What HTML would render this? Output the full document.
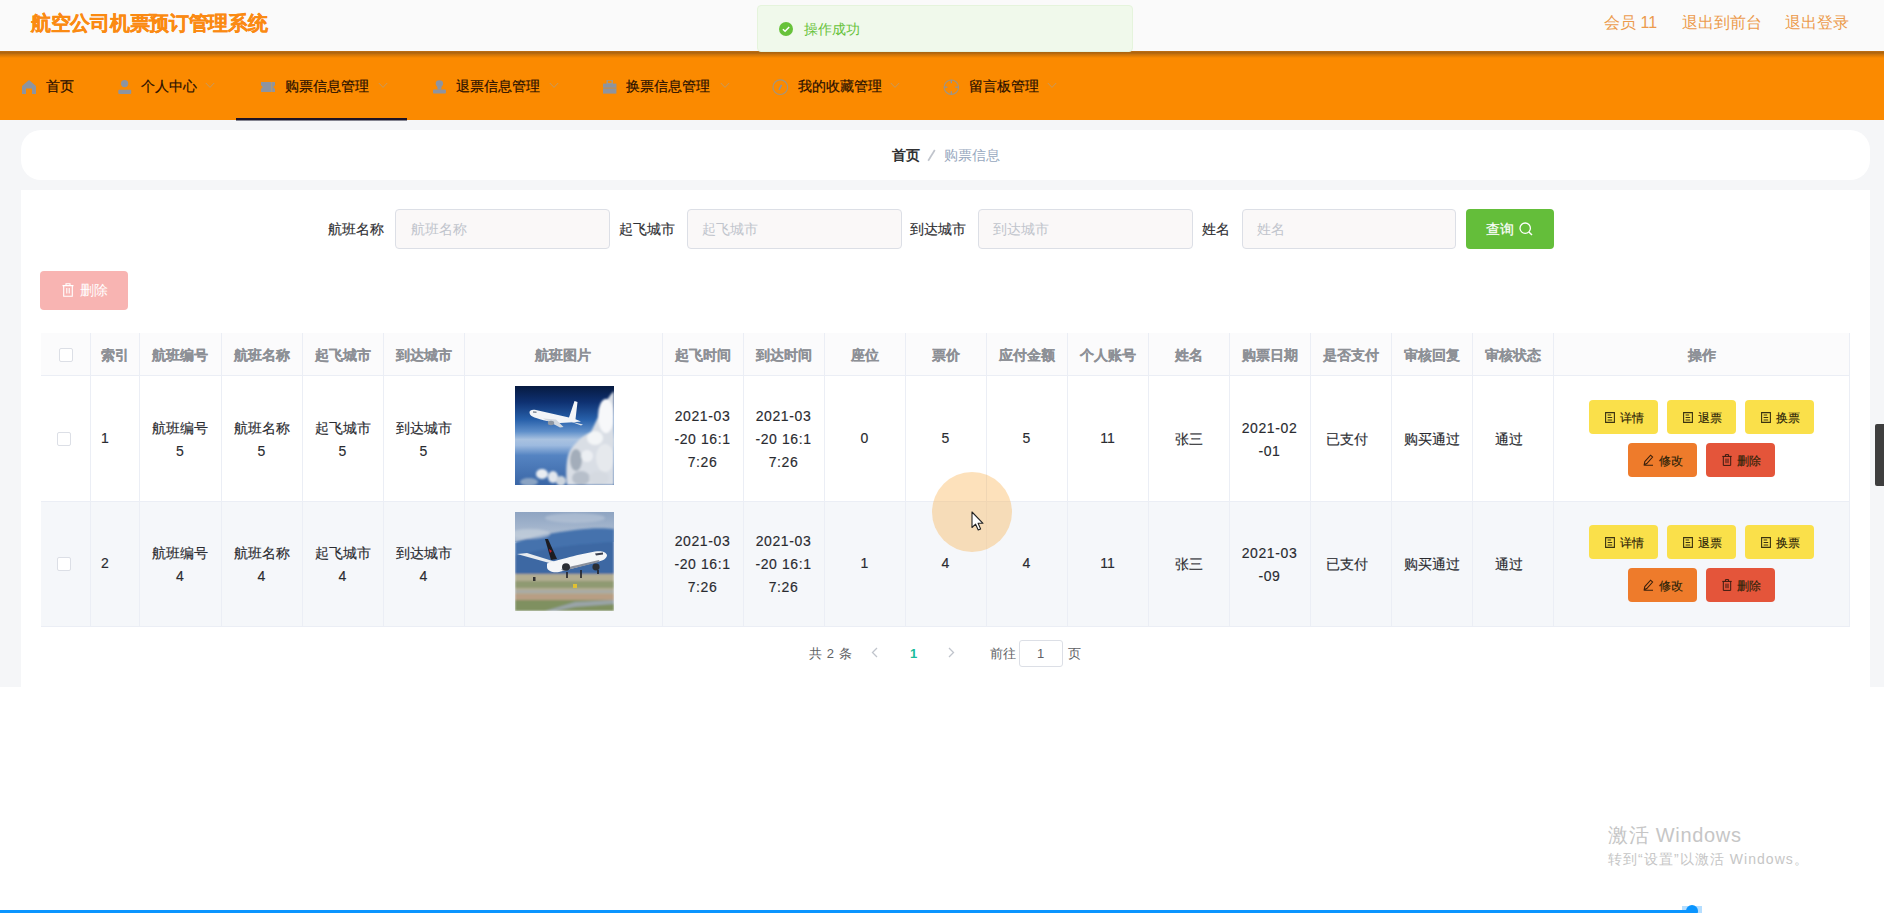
<!DOCTYPE html>
<html><head><meta charset="utf-8">
<style>
*{box-sizing:border-box;margin:0;padding:0}
html,body{width:1884px;height:913px;overflow:hidden;background:#fff;font-family:"Liberation Sans",sans-serif;color:#606266;position:relative}
.a{position:absolute;white-space:nowrap}
#hdr{left:0;top:0;width:1884px;height:51px;background:#fafafa}
#title{left:31px;top:10px;font-size:20px;letter-spacing:-0.3px;line-height:26px;font-weight:bold;color:#fa8a12;-webkit-text-stroke:0.3px #fa8a12}
.hl{top:10.5px;font-size:16px;line-height:24px;color:#ec9a4c}
#nav{left:0;top:51px;width:1884px;height:69px;background:#fb8a00}
#navsh{left:0;top:51px;width:1884px;height:7px;background:linear-gradient(rgba(120,80,40,.45) 0px,rgba(120,75,25,.62) 1.8px,rgba(120,75,25,.35) 3.5px,rgba(251,138,0,0) 7px)}
.nt{top:77px;font-size:14px;line-height:18px;color:#2a1000;-webkit-text-stroke:0.2px #2a1000}
.ni{top:80px}
.arr{top:83px}
#ul{left:236px;top:118px;width:171px;height:3px;background:linear-gradient(#1d1326 66%,rgba(40,40,60,.55) 66%)}
#toast{left:757px;top:5px;width:376px;height:47px;background:#f0f9eb;border:1px solid #e5f4dc;border-radius:4px}
#bg{left:0;top:120px;width:1884px;height:567px;background:#f5f6f8}
#bc{left:21px;top:130px;width:1849px;height:50px;background:#fff;border-radius:20px}
#card{left:21px;top:190px;width:1849px;height:497px;background:#fff}
.lbl{top:220px;font-size:14px;line-height:18px;color:#2f3033;-webkit-text-stroke:0.15px #2f3033}
.inp{top:209px;height:40px;background:#faf8f8;border:1px solid #dcdfe6;border-radius:4px;width:215px}
.ph{top:220px;font-size:14px;line-height:18px;color:#c0c4cc}
#qbtn{left:1466px;top:209px;width:88px;height:40px;background:#64be3a;border-radius:4px}
#dbtn{left:40px;top:271px;width:88px;height:39px;background:#f8b4b2;border-radius:4px}
.hd{top:333px;height:43px;background:#fbfbfc}
.vl{width:1px;background:#ebeef5}
.hl2{height:1px;background:#ebeef5}
.th{top:346px;font-size:14px;line-height:18px;font-weight:bold;color:#8d9096;text-align:center;-webkit-text-stroke:0.15px #8d9096}
.td{font-size:14px;line-height:23px;color:#2a2b30;-webkit-text-stroke:0.15px #2a2b30;text-align:center}
.cb{width:14px;height:14px;border:1px solid #dcdfe6;border-radius:2px;background:#fff}
.btn{height:34px;width:69px;border-radius:4px}
.bt{left:31px;top:10px;font-size:12px;line-height:16px;color:#2a2208;-webkit-text-stroke:0.15px #2a2208}
.y{background:#fae04a}
.o{background:#ee7b2b}
.r{background:#e4553a}
.pg{top:645px;font-size:13px;line-height:18px;color:#606266}
</style></head><body>
<div class="a" id="bg"></div>
<div class="a" id="hdr"></div>
<div class="a" id="title">航空公司机票预订管理系统</div>
<div class="a hl" style="left:1604px">会员 11</div>
<div class="a hl" style="left:1682px">退出到前台</div>
<div class="a hl" style="left:1785px">退出登录</div>

<div class="a" id="nav"></div>
<div class="a" id="navsh"></div>
<!-- nav items -->
<div class="a nt" style="left:46px">首页</div>
<div class="a nt" style="left:141px">个人中心</div>
<div class="a nt" style="left:285px">购票信息管理</div>
<div class="a nt" style="left:456px">退票信息管理</div>
<div class="a nt" style="left:626px">换票信息管理</div>
<div class="a nt" style="left:798px">我的收藏管理</div>
<div class="a nt" style="left:969px">留言板管理</div>
<!-- NAVICONS -->
<svg class="a" style="left:22px;top:80px" width="14" height="14" viewBox="0 0 14 14"><path d="M7 0 L14 6 V14 H10 V8.5 H4 V14 H0 V6 Z" fill="#8d94a0"/></svg>
<svg class="a" style="left:118px;top:80px" width="14" height="14" viewBox="0 0 14 14"><circle cx="6.6" cy="3.6" r="3.6" fill="#8d94a0"/><rect x="0.3" y="9.8" width="12.9" height="4.2" rx="1" fill="#8d94a0"/></svg>
<svg class="a" style="left:261px;top:82px" width="14" height="10" viewBox="0 0 14 10"><path d="M0 0 H14 V3.5 A1.5 1.5 0 0 0 14 6.5 V10 H0 V6.5 A1.5 1.5 0 0 0 0 3.5 Z" fill="#8d94a0"/><rect x="10.3" y="0" width="0.9" height="10" fill="#c49a60"/></svg>
<svg class="a" style="left:433px;top:80px" width="13" height="14" viewBox="0 0 13 14"><ellipse cx="6.4" cy="3.6" rx="3.7" ry="3.4" fill="#8d94a0"/><path d="M4.2 6 H8.6 L8.2 9.6 H4.6 Z" fill="#8d94a0"/><rect x="0" y="9.6" width="12.9" height="3.9" rx="0.8" fill="#8d94a0"/></svg>
<svg class="a" style="left:603px;top:80px" width="14" height="14" viewBox="0 0 14 14"><rect x="4.2" y="0" width="5" height="3.6" fill="none" stroke="#9c9a92" stroke-width="1.4"/><rect x="0" y="3.6" width="13.4" height="10" fill="#8d94a0"/><rect x="0" y="7.4" width="13.4" height="1.5" fill="#b39064"/></svg>
<svg class="a" style="left:772px;top:79px" width="17" height="17" viewBox="0 0 17 17"><circle cx="8.3" cy="8.2" r="7.3" fill="none" stroke="#a19580" stroke-width="1.2"/><path d="M9.6 5.8 L7 10.8" stroke="#8d94a0" stroke-width="1.6"/></svg>
<svg class="a" style="left:943px;top:79px" width="17" height="17" viewBox="0 0 17 17"><circle cx="8.3" cy="8.2" r="7.2" fill="none" stroke="#a19580" stroke-width="1.2"/><path d="M8.3 1 V4.2 M8.3 12.2 V15.4 M1.1 8.2 H4.3 M12.3 8.2 H15.5" stroke="#8d94a0" stroke-width="1.3"/></svg>
<svg class="a" style="left:205px;top:82px" width="10" height="7" viewBox="0 0 10 7"><path d="M0.8 1 L5 5.4 L9.2 1" fill="none" stroke="#c49a62" stroke-width="1"/></svg>
<svg class="a" style="left:378px;top:82px" width="10" height="7" viewBox="0 0 10 7"><path d="M0.8 1 L5 5.4 L9.2 1" fill="none" stroke="#c49a62" stroke-width="1"/></svg>
<svg class="a" style="left:549px;top:82px" width="10" height="7" viewBox="0 0 10 7"><path d="M0.8 1 L5 5.4 L9.2 1" fill="none" stroke="#c49a62" stroke-width="1"/></svg>
<svg class="a" style="left:720px;top:82px" width="10" height="7" viewBox="0 0 10 7"><path d="M0.8 1 L5 5.4 L9.2 1" fill="none" stroke="#c49a62" stroke-width="1"/></svg>
<svg class="a" style="left:890px;top:82px" width="10" height="7" viewBox="0 0 10 7"><path d="M0.8 1 L5 5.4 L9.2 1" fill="none" stroke="#c49a62" stroke-width="1"/></svg>
<svg class="a" style="left:1047px;top:82px" width="10" height="7" viewBox="0 0 10 7"><path d="M0.8 1 L5 5.4 L9.2 1" fill="none" stroke="#c49a62" stroke-width="1"/></svg>
<!-- /NAVICONS -->
<div class="a" id="ul"></div>

<div class="a" id="toast"></div>
<div class="a" style="left:804px;top:20px;font-size:14px;line-height:18px;color:#67c23a">操作成功</div>

<div class="a" id="bc"></div>
<div class="a" style="left:892px;top:146px;font-size:14px;line-height:18px;font-weight:bold;color:#303133">首页</div>
<svg class="a" style="left:926px;top:148px" width="12" height="15" viewBox="0 0 12 15"><path d="M8.8 2 L2.2 12.8" stroke="#c0c4cc" stroke-width="1.7"/></svg>
<div class="a" style="left:944px;top:146px;font-size:14px;line-height:18px;color:#97a8be">购票信息</div>

<div class="a" id="card"></div>
<div class="a lbl" style="left:328px">航班名称</div>
<div class="a inp" style="left:395px"></div>
<div class="a ph" style="left:411px">航班名称</div>
<div class="a lbl" style="left:619px">起飞城市</div>
<div class="a inp" style="left:687px"></div>
<div class="a ph" style="left:702px">起飞城市</div>
<div class="a lbl" style="left:910px">到达城市</div>
<div class="a inp" style="left:978px"></div>
<div class="a ph" style="left:993px">到达城市</div>
<div class="a lbl" style="left:1202px">姓名</div>
<div class="a inp" style="left:1242px;width:214px"></div>
<div class="a ph" style="left:1257px">姓名</div>
<div class="a" id="qbtn"></div>
<div class="a" style="left:1486px;top:220px;font-size:14px;line-height:18px;color:#fff;-webkit-text-stroke:0.2px #fff">查询</div>

<div class="a" id="dbtn"></div>
<div class="a" style="left:80px;top:281px;font-size:14px;line-height:18px;color:#fff">删除</div>

<!-- TABLE -->
<div class="a hd" style="left:41px;width:1809px"></div>
<div class="a" style="left:41px;top:502px;width:1809px;height:125px;background:#f5f7fa"></div>
<div class="a hl2" style="left:41px;top:375px;width:1809px"></div>
<div class="a hl2" style="left:41px;top:501px;width:1809px"></div>
<div class="a hl2" style="left:41px;top:626px;width:1809px"></div>
<div class="a vl" style="left:90px;top:333px;height:293px"></div>
<div class="a vl" style="left:139px;top:333px;height:293px"></div>
<div class="a vl" style="left:221px;top:333px;height:293px"></div>
<div class="a vl" style="left:302px;top:333px;height:293px"></div>
<div class="a vl" style="left:383px;top:333px;height:293px"></div>
<div class="a vl" style="left:464px;top:333px;height:293px"></div>
<div class="a vl" style="left:662px;top:333px;height:293px"></div>
<div class="a vl" style="left:743px;top:333px;height:293px"></div>
<div class="a vl" style="left:824px;top:333px;height:293px"></div>
<div class="a vl" style="left:905px;top:333px;height:293px"></div>
<div class="a vl" style="left:986px;top:333px;height:293px"></div>
<div class="a vl" style="left:1067px;top:333px;height:293px"></div>
<div class="a vl" style="left:1148px;top:333px;height:293px"></div>
<div class="a vl" style="left:1229px;top:333px;height:293px"></div>
<div class="a vl" style="left:1310px;top:333px;height:293px"></div>
<div class="a vl" style="left:1391px;top:333px;height:293px"></div>
<div class="a vl" style="left:1472px;top:333px;height:293px"></div>
<div class="a vl" style="left:1553px;top:333px;height:293px"></div>
<div class="a vl" style="left:1849px;top:333px;height:293px"></div>
<div class="a th" style="left:90px;width:49px">索引</div>
<div class="a th" style="left:139px;width:82px">航班编号</div>
<div class="a th" style="left:221px;width:81px">航班名称</div>
<div class="a th" style="left:302px;width:81px">起飞城市</div>
<div class="a th" style="left:383px;width:81px">到达城市</div>
<div class="a th" style="left:464px;width:198px">航班图片</div>
<div class="a th" style="left:662px;width:81px">起飞时间</div>
<div class="a th" style="left:743px;width:81px">到达时间</div>
<div class="a th" style="left:824px;width:81px">座位</div>
<div class="a th" style="left:905px;width:81px">票价</div>
<div class="a th" style="left:986px;width:81px">应付金额</div>
<div class="a th" style="left:1067px;width:81px">个人账号</div>
<div class="a th" style="left:1148px;width:81px">姓名</div>
<div class="a th" style="left:1229px;width:81px">购票日期</div>
<div class="a th" style="left:1310px;width:81px">是否支付</div>
<div class="a th" style="left:1391px;width:81px">审核回复</div>
<div class="a th" style="left:1472px;width:81px">审核状态</div>
<div class="a th" style="left:1553px;width:297px">操作</div>
<div class="a cb" style="left:59px;top:348px"></div>
<div class="a cb" style="left:57px;top:432px"></div>
<div class="a td" style="left:101px;top:427px;text-align:left">1</div>
<div class="a td" style="left:139px;top:417px;width:82px">航班编号<br>5</div>
<div class="a td" style="left:221px;top:417px;width:81px">航班名称<br>5</div>
<div class="a td" style="left:302px;top:417px;width:81px">起飞城市<br>5</div>
<div class="a td" style="left:383px;top:417px;width:81px">到达城市<br>5</div>
<div class="a td" style="left:662px;top:405px;width:81px;letter-spacing:0.6px">2021-03<br>-20 16:1<br>7:26</div>
<div class="a td" style="left:743px;top:405px;width:81px;letter-spacing:0.6px">2021-03<br>-20 16:1<br>7:26</div>
<div class="a td" style="left:824px;top:427px;width:81px">0</div>
<div class="a td" style="left:905px;top:427px;width:81px">5</div>
<div class="a td" style="left:986px;top:427px;width:81px">5</div>
<div class="a td" style="left:1067px;top:427px;width:81px">11</div>
<div class="a td" style="left:1148px;top:428px;width:81px">张三</div>
<div class="a td" style="left:1229px;top:417px;width:81px;letter-spacing:0.6px">2021-02<br>-01</div>
<div class="a td" style="left:1306px;top:428px;width:81px">已支付</div>
<div class="a td" style="left:1391px;top:428px;width:81px">购买通过</div>
<div class="a td" style="left:1468px;top:428px;width:81px">通过</div>
<div class="a" style="left:515px;top:386px;width:99px;height:99px;overflow:hidden"><svg width="99" height="99" viewBox="0 0 99 99" style="display:block">
<defs>
<linearGradient id="sky1" x1="0" y1="0" x2="0" y2="1">
<stop offset="0" stop-color="#061a40"/><stop offset="0.16" stop-color="#0e3070"/><stop offset="0.34" stop-color="#2760aa"/>
<stop offset="0.46" stop-color="#5f8fca"/><stop offset="0.54" stop-color="#a9c2e0"/><stop offset="0.6" stop-color="#9dbadf"/>
<stop offset="0.7" stop-color="#5584c2"/><stop offset="1" stop-color="#3a66a6"/></linearGradient>
<filter id="bl1" x="-10%" y="-10%" width="120%" height="120%"><feGaussianBlur stdDeviation="1.3"/></filter>
</defs>
<rect width="99" height="99" fill="url(#sky1)"/>
<g filter="url(#bl1)">
<ellipse cx="27" cy="88" rx="6" ry="5" fill="#e9edf2"/>
<ellipse cx="38" cy="91" rx="5" ry="6" fill="#e2e7ed"/>
<ellipse cx="46" cy="95" rx="5" ry="5" fill="#cdd5de"/>
<ellipse cx="14" cy="96" rx="9" ry="4" fill="#9fb3cb" opacity=".8"/>
<path d="M99 5 C95 9 91 15 88 21 C84 28 80 38 76 46 C70 49 65 52 62 56 C57 61 54 65 53 70 C51 78 51 90 52 99 L99 99 Z" fill="#d9dee5"/>
<ellipse cx="91" cy="30" rx="8" ry="17" fill="#f7f8fa"/>
<ellipse cx="80" cy="52" rx="8" ry="7" fill="#f3f5f7"/>
<ellipse cx="61" cy="74" rx="6" ry="11" fill="#a3adba"/>
<ellipse cx="72" cy="70" rx="6" ry="6" fill="#eceff3"/>
<ellipse cx="90" cy="72" rx="9" ry="14" fill="#e6e9ed"/>
<ellipse cx="66" cy="92" rx="9" ry="7" fill="#b7bfca"/>
<ellipse cx="84" cy="92" rx="10" ry="7" fill="#d5dae1"/>
</g>
<path d="M14.5 26.5 C14.5 24.2 17 23.2 21 24 L54 31.5 L59.5 15 L62.5 16 L60.5 33.2 L66 35.5 L58 36.2 L45 37 C33 35.5 22 33 17.5 30.5 C15.5 29.5 14.5 28 14.5 26.5 Z" fill="#f3f5f8"/>
<path d="M28 32.5 L45 41.5 L48.5 41 L41 33.5 Z" fill="#d3d9e0"/>
<ellipse cx="36" cy="37" rx="3.2" ry="2.2" fill="#8e97a3"/>
<path d="M18 26 L21.5 26.2" stroke="#4a5566" stroke-width="1"/>
<path d="M54 35 L68 38.5 L66 39.5 Z" fill="#dfe4ea"/>
</svg></div>
<div class="a btn y" style="left:1589px;top:400px"><svg class="a" style="left:16px;top:12px" width="10" height="11" viewBox="0 0 10 11"><path d="M0.6 0.6 H9.4 V10.4 H0.6 Z M2.6 3 H6.2 M2.6 5.5 H7.2 M2.6 8 H7.2" fill="none" stroke="#3a3210" stroke-width="1.1"/></svg><span class="a bt">详情</span></div>
<div class="a btn y" style="left:1667px;top:400px"><svg class="a" style="left:16px;top:12px" width="10" height="11" viewBox="0 0 10 11"><path d="M0.6 0.6 H9.4 V10.4 H0.6 Z M2.6 3 H6.2 M2.6 5.5 H7.2 M2.6 8 H7.2" fill="none" stroke="#3a3210" stroke-width="1.1"/></svg><span class="a bt">退票</span></div>
<div class="a btn y" style="left:1745px;top:400px"><svg class="a" style="left:16px;top:12px" width="10" height="11" viewBox="0 0 10 11"><path d="M0.6 0.6 H9.4 V10.4 H0.6 Z M2.6 3 H6.2 M2.6 5.5 H7.2 M2.6 8 H7.2" fill="none" stroke="#3a3210" stroke-width="1.1"/></svg><span class="a bt">换票</span></div>
<div class="a btn o" style="left:1628px;top:443px"><svg class="a" style="left:15px;top:11px" width="11" height="12" viewBox="0 0 11 12"><path d="M1.2 10.6 L1.8 7.6 L7.6 1.2 L9.6 3 L3.8 9.6 Z M1.2 11.3 H10" fill="none" stroke="#3a200c" stroke-width="1.05"/></svg><span class="a bt">修改</span></div>
<div class="a btn r" style="left:1706px;top:443px"><svg class="a" style="left:16px;top:11px" width="10" height="12" viewBox="0 0 10 12"><path d="M0.3 2.4 H9.7 M3.4 2.4 V0.6 H6.6 V2.4 M1.3 2.4 V11.4 H8.7 V2.4 M4 4.6 V9.2 M6 4.6 V9.2" fill="none" stroke="#3a1a10" stroke-width="1"/></svg><span class="a bt">删除</span></div>
<div class="a cb" style="left:57px;top:557px"></div>
<div class="a td" style="left:101px;top:552px;text-align:left">2</div>
<div class="a td" style="left:139px;top:542px;width:82px">航班编号<br>4</div>
<div class="a td" style="left:221px;top:542px;width:81px">航班名称<br>4</div>
<div class="a td" style="left:302px;top:542px;width:81px">起飞城市<br>4</div>
<div class="a td" style="left:383px;top:542px;width:81px">到达城市<br>4</div>
<div class="a td" style="left:662px;top:530px;width:81px;letter-spacing:0.6px">2021-03<br>-20 16:1<br>7:26</div>
<div class="a td" style="left:743px;top:530px;width:81px;letter-spacing:0.6px">2021-03<br>-20 16:1<br>7:26</div>
<div class="a td" style="left:824px;top:552px;width:81px">1</div>
<div class="a td" style="left:905px;top:552px;width:81px">4</div>
<div class="a td" style="left:986px;top:552px;width:81px">4</div>
<div class="a td" style="left:1067px;top:552px;width:81px">11</div>
<div class="a td" style="left:1148px;top:553px;width:81px">张三</div>
<div class="a td" style="left:1229px;top:542px;width:81px;letter-spacing:0.6px">2021-03<br>-09</div>
<div class="a td" style="left:1306px;top:553px;width:81px">已支付</div>
<div class="a td" style="left:1391px;top:553px;width:81px">购买通过</div>
<div class="a td" style="left:1468px;top:553px;width:81px">通过</div>
<div class="a" style="left:515px;top:512px;width:99px;height:99px;overflow:hidden"><svg width="99" height="99" viewBox="0 0 99 99" style="display:block">
<defs>
<linearGradient id="sk2" x1="0" y1="0" x2="0" y2="1">
<stop offset="0" stop-color="#8ea4c2"/><stop offset="1" stop-color="#b6c4d6"/></linearGradient>
<filter id="bl2" x="-5%" y="-5%" width="110%" height="110%"><feGaussianBlur stdDeviation="0.9"/></filter><filter id="bl2b"><feGaussianBlur stdDeviation="0.35"/></filter>
</defs>
<rect width="99" height="30" fill="url(#sk2)"/>
<g filter="url(#bl2)">
<path d="M0 30 C20 24 40 20 60 18 C75 16 90 16 99 17 L99 64 L0 64 Z" fill="#4572ad"/>
<path d="M0 44 C20 38 50 33 99 30 L99 64 L0 64 Z" fill="#3c68a3"/><ellipse cx="15" cy="22" rx="20" ry="5" fill="#c8d2de" opacity=".6"/><ellipse cx="60" cy="6" rx="30" ry="5" fill="#c0ccdc" opacity=".5"/>
<rect y="62" width="99" height="37" fill="#b2ad92"/>
<rect y="69" width="99" height="7" fill="#8f9a72"/>
<rect y="78" width="99" height="3" fill="#a8aaa6"/>
<rect y="82" width="99" height="6" fill="#b89e84"/>
<rect y="88" width="99" height="11" fill="#7f9060"/>
<path d="M30 99 L60 90 L99 88 L99 92 L60 95 L40 99 Z" fill="#9aa4a8"/>
</g>
<g filter="url(#bl2b)">
<path d="M2 42 L38 52 L44 51 L12 41 Z" fill="#e8ecf0"/>
<path d="M30 27 L33 27 L42 47 L36 48 Z" fill="#1a1c24"/>
<path d="M34 37 L37 39 L35 41 Z" fill="#c0202a"/>
<path d="M32 51.5 C40 49 60 43 80 39.5 C86 38.5 91 39.5 92 43 C92 46.5 88 48.5 84 49.5 L44 60 C38 61 32 59 32 55 Z" fill="#f4f6f8"/><path d="M80 41.5 L88 40.5 L88 42.5 L81 43.5 Z" fill="#3a4050"/>
<path d="M46 57 C54 55 70 51 84 48 C85 49 84 50 82 50.5 L48 59 Z" fill="#8a909c"/>
<ellipse cx="51" cy="55" rx="4" ry="3.8" fill="#2a2d36"/>
<ellipse cx="81" cy="55" rx="3.6" ry="3.4" fill="#2a2d36"/>
<path d="M52 60 V66 M66 58 V66 M83 58 V62" stroke="#202228" stroke-width="1.6"/>
<rect x="58" y="72" width="4" height="4" fill="#e0c030"/>
<rect x="18" y="65" width="2.5" height="4" fill="#333"/>
</g>
</svg></div>
<div class="a btn y" style="left:1589px;top:525px"><svg class="a" style="left:16px;top:12px" width="10" height="11" viewBox="0 0 10 11"><path d="M0.6 0.6 H9.4 V10.4 H0.6 Z M2.6 3 H6.2 M2.6 5.5 H7.2 M2.6 8 H7.2" fill="none" stroke="#3a3210" stroke-width="1.1"/></svg><span class="a bt">详情</span></div>
<div class="a btn y" style="left:1667px;top:525px"><svg class="a" style="left:16px;top:12px" width="10" height="11" viewBox="0 0 10 11"><path d="M0.6 0.6 H9.4 V10.4 H0.6 Z M2.6 3 H6.2 M2.6 5.5 H7.2 M2.6 8 H7.2" fill="none" stroke="#3a3210" stroke-width="1.1"/></svg><span class="a bt">退票</span></div>
<div class="a btn y" style="left:1745px;top:525px"><svg class="a" style="left:16px;top:12px" width="10" height="11" viewBox="0 0 10 11"><path d="M0.6 0.6 H9.4 V10.4 H0.6 Z M2.6 3 H6.2 M2.6 5.5 H7.2 M2.6 8 H7.2" fill="none" stroke="#3a3210" stroke-width="1.1"/></svg><span class="a bt">换票</span></div>
<div class="a btn o" style="left:1628px;top:568px"><svg class="a" style="left:15px;top:11px" width="11" height="12" viewBox="0 0 11 12"><path d="M1.2 10.6 L1.8 7.6 L7.6 1.2 L9.6 3 L3.8 9.6 Z M1.2 11.3 H10" fill="none" stroke="#3a200c" stroke-width="1.05"/></svg><span class="a bt">修改</span></div>
<div class="a btn r" style="left:1706px;top:568px"><svg class="a" style="left:16px;top:11px" width="10" height="12" viewBox="0 0 10 12"><path d="M0.3 2.4 H9.7 M3.4 2.4 V0.6 H6.6 V2.4 M1.3 2.4 V11.4 H8.7 V2.4 M4 4.6 V9.2 M6 4.6 V9.2" fill="none" stroke="#3a1a10" stroke-width="1"/></svg><span class="a bt">删除</span></div>
<!-- /TABLE -->

<div class="a pg" style="left:809px;word-spacing:1.2px">共 2 条</div>
<div class="a pg" style="left:910px;color:#1abc9c;font-weight:bold">1</div>
<div class="a pg" style="left:990px">前往</div>
<div class="a" style="left:1019px;top:640px;width:44px;height:27px;border:1px solid #dcdfe6;border-radius:3px;background:#fff"></div>
<div class="a pg" style="left:1037px">1</div>
<div class="a pg" style="left:1068px">页</div>

<!-- EXTRA -->
<svg class="a" style="left:779px;top:22px" width="14" height="14" viewBox="0 0 14 14"><circle cx="7" cy="7" r="7" fill="#67c23a"/><path d="M3.9 7.2 L6.1 9.3 L10.2 5.1" fill="none" stroke="#fff" stroke-width="1.5"/></svg>
<svg class="a" style="left:1519px;top:222px" width="14" height="14" viewBox="0 0 14 14"><circle cx="6.2" cy="6.2" r="5.2" fill="none" stroke="#fff" stroke-width="1.3"/><path d="M9.9 9.9 L13 13" stroke="#fff" stroke-width="1.4"/></svg>
<svg class="a" style="left:62px;top:283px" width="12" height="14" viewBox="0 0 12 14"><path d="M0.5 2.6 H11.5 M4 2.6 V0.8 H8 V2.6 M1.7 2.6 V13.2 H10.3 V2.6 M4.8 5 V10.5 M7.2 5 V10.5" fill="none" stroke="#fff" stroke-width="1.1"/></svg>
<svg class="a" style="left:871px;top:647px" width="7" height="11" viewBox="0 0 7 11"><path d="M6 1 L1.5 5.5 L6 10" fill="none" stroke="#c0c4cc" stroke-width="1.3"/></svg>
<svg class="a" style="left:948px;top:647px" width="7" height="11" viewBox="0 0 7 11"><path d="M1 1 L5.5 5.5 L1 10" fill="none" stroke="#c0c4cc" stroke-width="1.3"/></svg>
<div class="a" style="left:932px;top:472px;width:80px;height:80px;border-radius:50%;background:rgba(249,170,60,.35)"></div>
<svg class="a" style="left:971px;top:511px" width="14" height="21" viewBox="0 0 14 21"><path d="M1 1 V16.5 L4.6 13.2 L7.2 19 L9.6 17.9 L7.1 12.3 H12 Z" fill="#fff" stroke="#222" stroke-width="1.1" stroke-linejoin="round"/></svg>
<div class="a" style="left:1875px;top:424px;width:9px;height:62px;background:#3e3e3e;border-radius:2px 0 0 2px"></div>
<div class="a" style="left:1682px;top:906px;width:20px;height:7px;background:#b5deff"></div>
<div class="a" style="left:1686px;top:905px;width:12px;height:12px;border-radius:50%;background:#0a95ff"></div>
<!-- /EXTRA -->
<div class="a" style="left:1608px;top:822px;font-size:20px;line-height:26px;color:#c6c6c6;letter-spacing:0.7px">激活 Windows</div>
<div class="a" style="left:1608px;top:850px;font-size:14px;line-height:18px;color:#c6c6c6;letter-spacing:1.05px">转到“设置”以激活 Windows。</div>
<div class="a" style="left:0;top:910px;width:1690px;height:3px;background:#0a95ff"></div>
</body></html>
